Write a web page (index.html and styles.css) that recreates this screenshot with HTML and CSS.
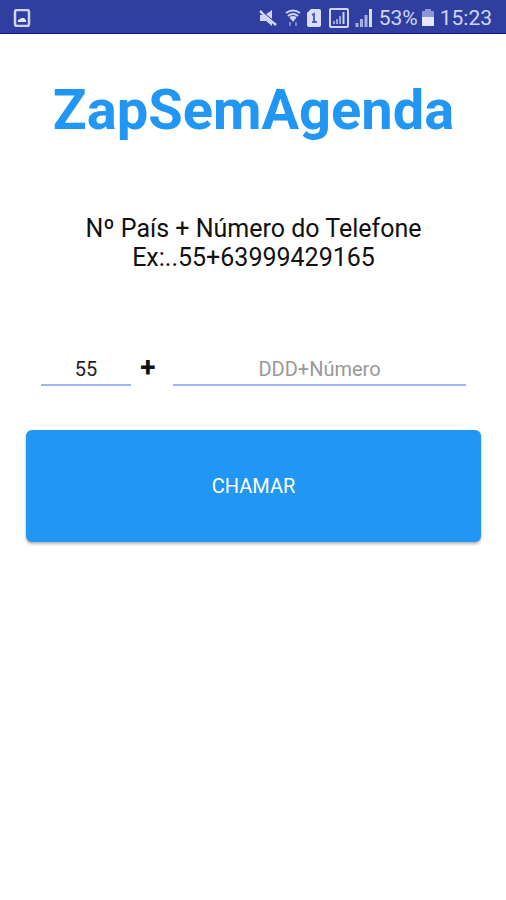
FILE: index.html
```
<!DOCTYPE html>
<html lang="pt-BR">
<head>
    <meta charset="UTF-8">
    <meta name="viewport" content="width=device-width, initial-scale=1.0">
    <title>ZapSemAgenda</title>
    <link rel="stylesheet" href="styles.css">
</head>
<body>
    <header class="status-bar">
        <svg class="icon-picture" width="18" height="18" viewBox="0 0 18 18">
            <rect x="2" y="1" width="14" height="16" rx="2" fill="none" stroke="#cfd5fa" stroke-width="2.500"/>
            <path d="M5 13v-2l2-1 1-1h3l2 2v2z" fill="#e4e8ff"/>
        </svg>
        <div class="status-icons">
            <!-- muted -->
            <svg class="icon-mute" width="18" height="18" viewBox="0 0 18 18">
                <path d="M6 6l7-5v9z" fill="#cfd5fa"/>
                <path d="M1 6h4l8 6v5l-6-5H1z" fill="#cfd5fa"/>
                <path d="M1 2l16 14" stroke="#cfd5fa" stroke-width="2.500"/>
                <path d="M4 3l12 10" stroke="#303f9f" stroke-width="1"/>
            </svg>
            <!-- wifi -->
            <svg width="16" height="18" viewBox="0 0 16 18">
                <path d="M1 4q7-5 14 0M3 7q5-4 10 0M5 9q3-2 6 0" fill="none" stroke="#cfd5fa" stroke-width="2"/>
                <path d="M5 9h6l-3 4z" fill="#cfd5fa"/>
                <path d="M5 13v4M11 13v4" stroke="#7683cc" stroke-width="2"/>
            </svg>
            <!-- sim 1 -->
            <svg class="icon-sim" width="14" height="18" viewBox="0 0 14 18">
                <path d="M4 0h8q2 0 2 2v14q0 2-2 2H2q-2 0-2-2V4z" fill="#d9defc"/>
                <path d="M5 6l2-1v8M5 13h5" fill="none" stroke="#5562b0" stroke-width="2"/>
            </svg>
            <svg width="20" height="20" viewBox="0 0 20 20">
                <rect x="1" y="1" width="18" height="18" rx="1" fill="none" stroke="#cfd5fa" stroke-width="2"/>
                <path d="M5 16v-3M8 16v-5M11 16V8" stroke="#98a3e2" stroke-width="2"/>
                <path d="M14.500 16V4" stroke="#cfd5fa" stroke-width="2"/>
            </svg>
            <svg width="18" height="18" viewBox="0 0 18 18">
                <path d="M2 18v-4M6.500 18v-8M11 18V6" stroke="#a5afe8" stroke-width="3"/>
                <path d="M15.500 18V0" stroke="#d9defc" stroke-width="3"/>
            </svg>
            <span class="battery-level">53%</span>
            <svg class="icon-battery" width="12" height="17" viewBox="0 0 12 17">
                <path d="M3 0h6v2h2q1 0 1 1v5H0V3q0-1 1-1h2z" fill="#8b96d8"/>
                <path d="M0 8h12v8q0 1-1 1H1q-1 0-1-1z" fill="#e4e8ff"/>
            </svg>
            <span class="clock">15:23</span>
        </div>
    </header>
    <main class="content">
        <h1>ZapSemAgenda</h1>
        <p class="hint">Nº País + Número do Telefone<br>Ex:..55+63999429165</p>
        <form>
            <div class="fields">
                <input class="country" type="text" value="55" aria-label="Nº País">
                <span class="plus">+</span>
                <input class="phone" type="tel" placeholder="DDD+Número" aria-label="Número do Telefone">
            </div>
            <button class="call" type="button">CHAMAR</button>
        </form>
    </main>
</body>
</html>
```

FILE: styles.css
```
* {
    box-sizing: border-box;
}
body {
    margin: 0;
    min-height: 100vh;
    background: #fff;
    color: #111;
    font-family: Roboto, "Liberation Sans", sans-serif;
}
.status-bar {
    display: flex;
    justify-content: space-between;
    align-items: center;
    height: 34px;
    padding: 2px 14px 0 13px;
    background: #303f9f;
    border-bottom: 1px solid #0a0f96;
    color: #cfd5fa;
    font-size: 21px;
    line-height: 24px;
}
.status-icons {
    display: flex;
    align-items: center;
    gap: 6px;
}
.icon-mute,
.icon-sim {
    margin-right: 2px;
}
.battery-level {
    margin-right: -2px;
}
.content {
    padding: 43px 25px 0 26px;
}
h1 {
    margin: 0;
    color: #2196f3;
    font-size: 56px;
    font-weight: bold;
    line-height: 66px;
    text-align: center;
}
.hint {
    margin: 71px 0 82px;
    font-size: 25px;
    line-height: 29px;
    text-align: center;
}
.fields {
    display: flex;
    margin: 0 15px 44px;
}
input {
    min-width: 0;
    height: 32px;
    padding: 0;
    border: none;
    border-bottom: 2px solid #9fb6f3;
    border-radius: 0;
    background: none;
    color: #222;
    font-family: inherit;
    font-size: 20px;
    text-align: center;
    outline: none;
}
input::placeholder {
    color: #999;
}
.country {
    width: 90px;
}
.phone {
    flex: 1;
}
.plus {
    width: 42px;
    padding-right: 8px;
    font-size: 28px;
    font-weight: bold;
    line-height: 28px;
    text-align: center;
}
.call {
    display: block;
    width: 100%;
    height: 112px;
    border: none;
    border-radius: 6px;
    background: #2196f3;
    box-shadow: 0 2px 3px rgba(0, 0, 0, 0.3);
    color: #fff;
    font-family: inherit;
    font-size: 20px;
    cursor: pointer;
}
```
